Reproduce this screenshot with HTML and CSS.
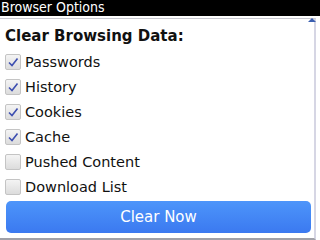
FILE: index.html
```html
<!DOCTYPE html>
<html>
<head>
<meta charset="utf-8">
<link rel="stylesheet" href="styles.css">
</head>
<body>
<div class="screen">
  <div class="titlebar">Browser Options</div>
  <div class="panel">
    <div class="scroll-up"></div>
    <div class="content">
      <div class="heading">Clear Browsing Data:</div>
      <div class="row"><span class="box checked"><svg viewBox="0 0 14 14" width="14" height="14"><path d="M3 7.5 L6 10.5 L11.5 3.5" fill="none" stroke="#3d4fb0" stroke-width="1.6"/></svg></span><span class="label">Passwords</span></div>
      <div class="row"><span class="box checked"><svg viewBox="0 0 14 14" width="14" height="14"><path d="M3 7.5 L6 10.5 L11.5 3.5" fill="none" stroke="#3d4fb0" stroke-width="1.6"/></svg></span><span class="label">History</span></div>
      <div class="row"><span class="box checked"><svg viewBox="0 0 14 14" width="14" height="14"><path d="M3 7.5 L6 10.5 L11.5 3.5" fill="none" stroke="#3d4fb0" stroke-width="1.6"/></svg></span><span class="label">Cookies</span></div>
      <div class="row"><span class="box checked"><svg viewBox="0 0 14 14" width="14" height="14"><path d="M3 7.5 L6 10.5 L11.5 3.5" fill="none" stroke="#3d4fb0" stroke-width="1.6"/></svg></span><span class="label">Cache</span></div>
      <div class="row"><span class="box"></span><span class="label">Pushed Content</span></div>
      <div class="row"><span class="box"></span><span class="label">Download List</span></div>
      <div class="button">Clear Now</div>
    </div>
  </div>
</div>
</body>
</html>
```
FILE: styles.css
```css
html, body { margin: 0; padding: 0; }
body { width: 320px; height: 240px; overflow: hidden; background: #fff; font-family: "DejaVu Sans", sans-serif; }
.screen { width: 320px; height: 240px; display: flex; flex-direction: column; }
.titlebar { height: 16px; background: #000; color: #fff; font-family: "DejaVu Sans Condensed", "DejaVu Sans", sans-serif; font-size: 14px; line-height: 15px; padding-left: 1px; }
.panel { position: relative; flex: 1; border-top: 1px solid #c8c8d0; margin-top: 2px; border-right: 2px solid #d6d6e4; margin-right: 4px; border-bottom: 2px solid #a0a0a8; }
.scroll-up { position: absolute; right: -2px; top: -1px; width: 0; height: 0; border-left: 4px solid transparent; border-right: 4px solid transparent; border-bottom: 4px solid #3a5fb0; }
.content { padding: 7px 0 0 5px; }
.heading { font-weight: bold; font-size: 15px; line-height: 20px; color: #111; margin-bottom: 3px; }
.row { display: flex; align-items: center; height: 25px; }
.box { width: 14px; height: 14px; border: 1px solid #c4c4c4; border-radius: 2px; background: linear-gradient(#f4f4f4, #dcdcdc); margin-right: 4px; display: flex; }
.label { font-size: 14.5px; color: #111; }
.button { margin-top: 2px; width: 305px; height: 32px; margin-left: 1px; border-radius: 5px; background: linear-gradient(#4d95fa, #3b79f0); color: #fff; font-size: 15px; display: flex; align-items: center; justify-content: center; }
```
